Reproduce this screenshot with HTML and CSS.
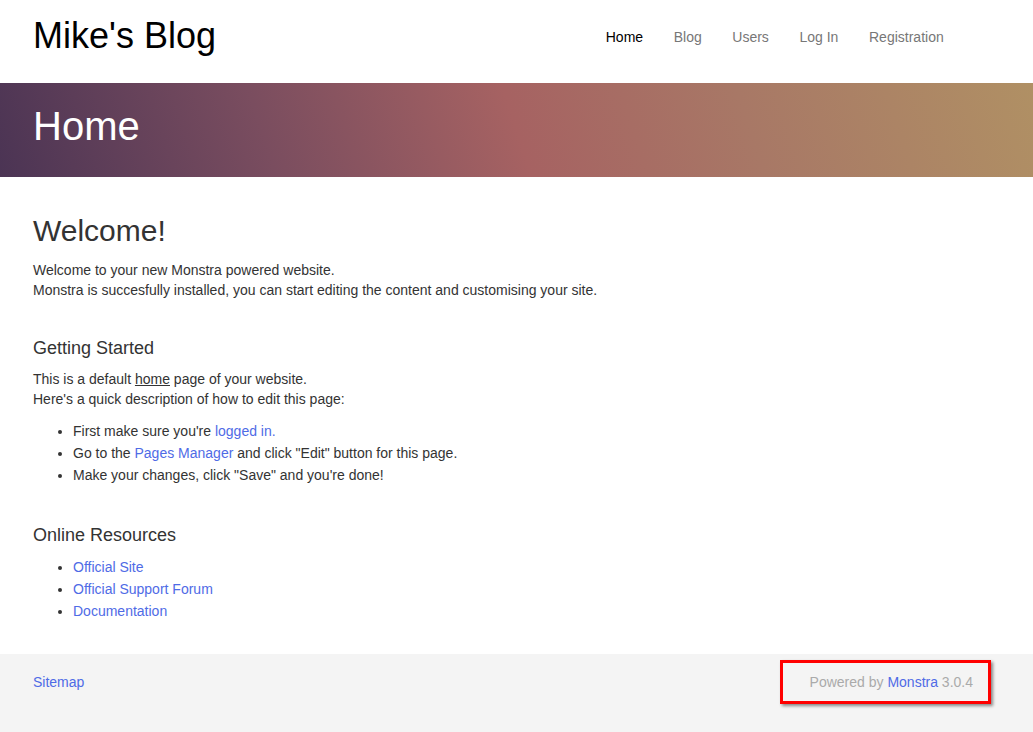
FILE: index.html
```html
<!DOCTYPE html>
<html lang="en">
<head>
<meta charset="utf-8">
<title>Mike's Blog - Home</title>
<link rel="stylesheet" href="styles.css">
</head>
<body>
<header class="site-header">
  <a class="brand" href="#">Mike's Blog</a>
  <nav class="main-nav">
    <a class="nav-link active" href="#">Home</a>
    <a class="nav-link" href="#">Blog</a>
    <a class="nav-link" href="#">Users</a>
    <a class="nav-link" href="#">Log In</a>
    <a class="nav-link" href="#">Registration</a>
  </nav>
</header>
<section class="hero">
  <h1 class="hero-title">Home</h1>
</section>
<main class="content">
  <h1 class="page-title">Welcome!</h1>
  <p class="text">Welcome to your new Monstra powered website.<br>Monstra is succesfully installed, you can start editing the content and customising your site.</p>
  <h3 class="section-title first">Getting Started</h3>
  <p class="text">This is a default <u>home</u> page of your website.<br>Here's a quick description of how to edit this page:</p>
  <ul class="list">
    <li>First make sure you're <a href="#">logged in.</a></li>
    <li>Go to the <a href="#">Pages Manager</a> and click "Edit" button for this page.</li>
    <li>Make your changes, click "Save" and you're done!</li>
  </ul>
  <h3 class="section-title">Online Resources</h3>
  <ul class="list">
    <li><a href="#">Official Site</a></li>
    <li><a href="#">Official Support Forum</a></li>
    <li><a href="#">Documentation</a></li>
  </ul>
</main>
<footer class="site-footer">
  <a href="#">Sitemap</a>
  <span class="powered">Powered by <a href="#">Monstra</a> 3.0.4</span>
</footer>
</body>
</html>
```
FILE: styles.css
```css
*, *::before, *::after { box-sizing: border-box; }
html, body { margin: 0; padding: 0; }
body {
  font-family: "Liberation Sans", Arial, sans-serif;
  font-size: 14px;
  line-height: 20px;
  color: #333;
  background: #fff;
  width: 1033px;
  height: 732px;
  overflow: hidden;
  display: flex;
  flex-direction: column;
}
a { color: #4f6be6; text-decoration: none; }

.site-header {
  height: 83px;
  flex: none;
  display: flex;
  align-items: center;
  padding: 0 33px;
}
.brand {
  color: #000;
  font-size: 36px;
  line-height: 40px;
  margin-top: -12px;
}
.main-nav {
  margin-left: auto;
  margin-right: 41px;
  display: flex;
  margin-top: -9px;
}
.nav-link {
  color: #777;
  padding: 0 15.3px;
  font-size: 14px;
  line-height: 20px;
}
.nav-link.active { color: #000; }

.hero {
  height: 94px;
  flex: none;
  padding: 0 33px 8px;
  display: flex;
  align-items: center;
  background: linear-gradient(72deg, #4b3454 0%, #7a4d5f 26%, #a66262 50%, #a87866 72%, #b09064 100%);
}
.hero-title {
  margin: 0;
  color: #fff;
  font-weight: normal;
  font-size: 40px;
  line-height: 44px;
}

.content {
  padding: 0 33px;
  flex: 1;
}
.page-title {
  font-size: 30px;
  font-weight: normal;
  line-height: 33px;
  margin: 37px 0 13px;
}
.text { margin: 0; }
.section-title {
  font-size: 18px;
  font-weight: normal;
  line-height: 20px;
  margin: 39px 0 11px;
}
.section-title.first { margin-top: 38px; }
.list {
  margin: 11px 0 0;
  padding-left: 40px;
}
.list li { line-height: 22px; }

.site-footer {
  position: relative;
  background: #f4f4f4;
  height: 78px;
  flex: none;
  display: flex;
  justify-content: space-between;
  align-items: flex-start;
  padding: 18px 60px 0 33px;
}
.powered {
  color: #aaa;
  position: relative;
}
.powered::after {
  content: "";
  position: absolute;
  left: -30px;
  top: -12px;
  width: 211px;
  height: 44px;
  border: 3px solid #f00;
  box-shadow: 2px 2px 3px rgba(0,0,0,0.45);
}
```
